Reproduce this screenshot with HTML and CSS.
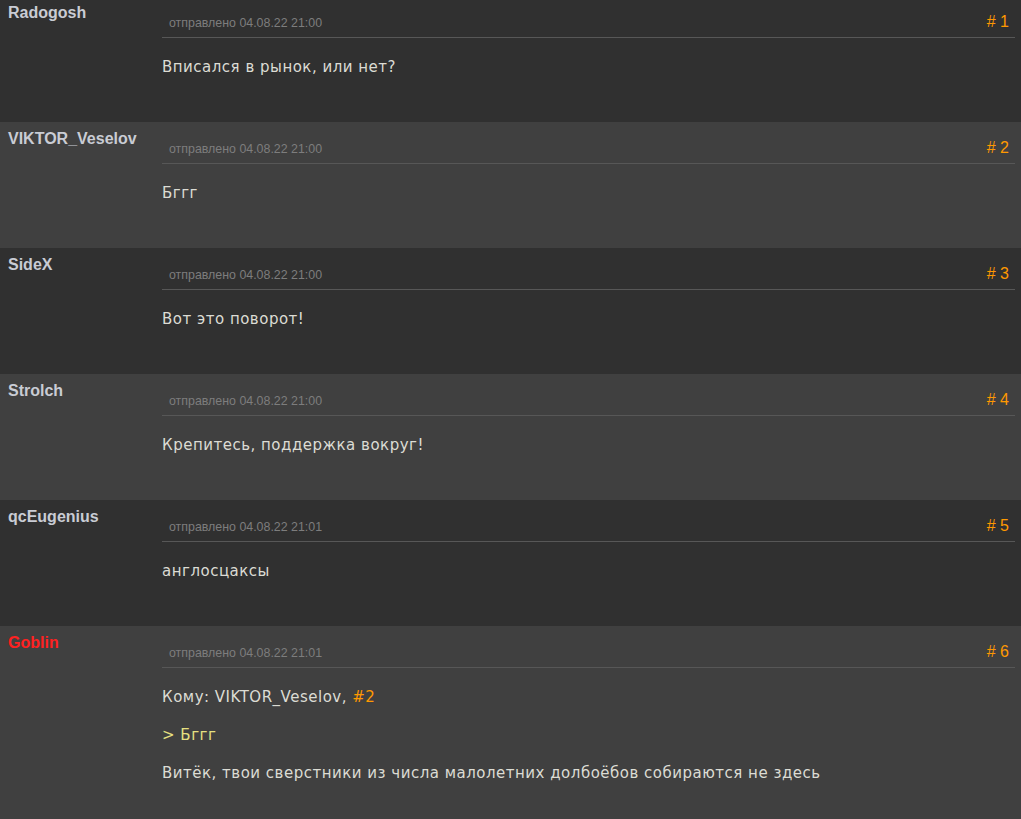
FILE: index.html
```html
<!DOCTYPE html>
<html lang="ru">
<head>
<meta charset="utf-8">
<link rel="stylesheet" href="styles.css">
</head>
<body>
<div class="thread">
  <div class="post">
    <div class="author">Radogosh</div>
    <div class="body">
      <div class="head"><span class="date">отправлено 04.08.22 21:00</span><span class="num"># 1</span></div>
      <div class="text"><p>Вписался в рынок, или нет?</p></div>
    </div>
  </div>
  <div class="post alt">
    <div class="author">VIKTOR_Veselov</div>
    <div class="body">
      <div class="head"><span class="date">отправлено 04.08.22 21:00</span><span class="num"># 2</span></div>
      <div class="text"><p>Бггг</p></div>
    </div>
  </div>
  <div class="post">
    <div class="author">SideX</div>
    <div class="body">
      <div class="head"><span class="date">отправлено 04.08.22 21:00</span><span class="num"># 3</span></div>
      <div class="text"><p>Вот это поворот!</p></div>
    </div>
  </div>
  <div class="post alt">
    <div class="author">Strolch</div>
    <div class="body">
      <div class="head"><span class="date">отправлено 04.08.22 21:00</span><span class="num"># 4</span></div>
      <div class="text"><p>Крепитесь, поддержка вокруг!</p></div>
    </div>
  </div>
  <div class="post">
    <div class="author">qcEugenius</div>
    <div class="body">
      <div class="head"><span class="date">отправлено 04.08.22 21:01</span><span class="num"># 5</span></div>
      <div class="text"><p>англосцаксы</p></div>
    </div>
  </div>
  <div class="post alt">
    <div class="author admin">Goblin</div>
    <div class="body">
      <div class="head"><span class="date">отправлено 04.08.22 21:01</span><span class="num"># 6</span></div>
      <div class="text">
        <p>Кому: VIKTOR_Veselov, <a class="ref" href="#">#2</a></p>
        <p class="quote">&gt; Бггг</p>
        <p>Витёк, твои сверстники из числа малолетних долбоёбов собираются не здесь</p>
      </div>
    </div>
  </div>
</div>
</body>
</html>
```

FILE: styles.css
```css
html, body {
  margin: 0;
  padding: 0;
  background: #404040;
}
.thread {
  margin-top: -4px;
}
.post {
  display: flex;
  min-height: 126px;
  background: #303030;
}
.post.alt {
  background: #404040;
}
.author {
  width: 154px;
  flex: none;
  padding: 7px 0 0 8px;
  font: bold 16px/19px "Liberation Sans", Arial, sans-serif;
  color: #c9ccd4;
}
.author.admin {
  color: #ff2121;
}
.body {
  flex: 1;
  padding-right: 6px;
}
.head {
  display: flex;
  justify-content: space-between;
  align-items: baseline;
  padding: 17px 6px 5px 7px;
  border-bottom: 1px solid #575757;
  font-family: "Liberation Sans", Arial, sans-serif;
}
.date {
  font-size: 12.4px;
  line-height: 18px;
  color: #7d7d7d;
}
.num {
  font-size: 16px;
  line-height: 18px;
  color: #ff9900;
}
.text {
  padding-top: 18px;
  font: 15px/22px "DejaVu Sans", Verdana, sans-serif;
  letter-spacing: 0.5px;
  color: #dcdcd4;
}
.text p {
  margin: 0 0 16px 0;
}
.text .quote {
  color: #e6e080;
}
.ref {
  color: #ff9900;
  text-decoration: none;
}
```
